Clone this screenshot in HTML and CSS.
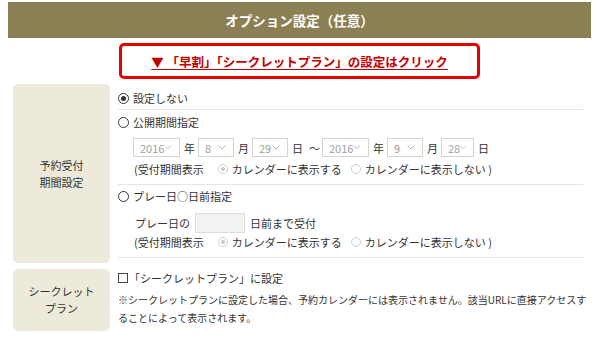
FILE: index.html
```html
<!DOCTYPE html>
<html lang="ja">
<head>
<meta charset="utf-8">
<title>オプション設定</title>
<link rel="stylesheet" href="styles.css">
</head>
<body>
<div class="page">
  <div class="head">オプション設定（任意）</div>
  <div class="toggle-wrap">
    <a class="toggle">▼ 「早割」「シークレットプラン」の設定はクリック</a>
  </div>
  <div class="table">
    <div class="row row-period">
      <div class="label">予約受付<br>期間設定</div>
      <div class="cell">
        <div class="opt opt1">
          <div class="title"><span class="radio on"></span>設定しない</div>
        </div>
        <div class="opt opt2">
          <div class="title"><span class="radio"></span>公開期間指定</div>
          <div class="dates">
            <span class="sel w-y">2016<svg class="chev" viewBox="0 0 8 5" width="8" height="5"><path d="M0.5 0.5 L4 4 L7.5 0.5"/></svg></span>
            <span class="unit">年</span>
            <span class="sel w-m">8<svg class="chev" viewBox="0 0 8 5" width="8" height="5"><path d="M0.5 0.5 L4 4 L7.5 0.5"/></svg></span>
            <span class="unit">月</span>
            <span class="sel w-m">29<svg class="chev" viewBox="0 0 8 5" width="8" height="5"><path d="M0.5 0.5 L4 4 L7.5 0.5"/></svg></span>
            <span class="unit">日</span>
            <span class="tilde">～</span>
            <span class="sel w-y">2016<svg class="chev" viewBox="0 0 8 5" width="8" height="5"><path d="M0.5 0.5 L4 4 L7.5 0.5"/></svg></span>
            <span class="unit">年</span>
            <span class="sel w-m">9<svg class="chev" viewBox="0 0 8 5" width="8" height="5"><path d="M0.5 0.5 L4 4 L7.5 0.5"/></svg></span>
            <span class="unit">月</span>
            <span class="sel w-d">28<svg class="chev" viewBox="0 0 8 5" width="8" height="5"><path d="M0.5 0.5 L4 4 L7.5 0.5"/></svg></span>
            <span class="unit">日</span>
          </div>
          <div class="sub">
            <span class="sub-lead">(受付期間表示</span>
            <span class="dradio on"></span><span>カレンダーに表示する</span>
            <span class="dradio second"></span><span>カレンダーに表示しない )</span>
          </div>
        </div>
        <div class="opt opt3">
          <div class="title"><span class="radio"></span>プレー日○日前指定</div>
          <div class="days">
            <span>プレー日の</span>
            <span class="num"></span>
            <span>日前まで受付</span>
          </div>
          <div class="sub">
            <span class="sub-lead">(受付期間表示</span>
            <span class="dradio on"></span><span>カレンダーに表示する</span>
            <span class="dradio second"></span><span>カレンダーに表示しない )</span>
          </div>
        </div>
      </div>
    </div>
    <div class="row row-secret">
      <div class="label">シークレット<br>プラン</div>
      <div class="cell">
        <div class="check-line"><span class="check"></span>「シークレットプラン」に設定</div>
        <div class="note">※シークレットプランに設定した場合、予約カレンダーには表示されません。該当URLに直接アクセスす<br>ることによって表示されます。</div>
      </div>
    </div>
  </div>
</div>
</body>
</html>
```

FILE: styles.css
```css
html, body {
  margin: 0;
  padding: 0;
  background: #ffffff;
}

body {
  font-family: "Noto Sans CJK JP", "Noto Sans", sans-serif;
  color: #333333;
  font-size: 11px;
}

.page {
  padding: 2px 9px 0 8px;
}

.head {
  height: 36px;
  background: #8b7f54;
  color: #ffffff;
  font-weight: bold;
  font-size: 13.5px;
  display: flex;
  align-items: center;
  justify-content: center;
}

.toggle-wrap {
  display: flex;
  justify-content: center;
  margin-top: 5px;
}

.toggle {
  box-sizing: border-box;
  width: 361px;
  height: 36px;
  border: 3px solid #e60000;
  border-radius: 5px;
  display: flex;
  align-items: center;
  justify-content: center;
  color: #c40000;
  font-weight: bold;
  font-size: 12.5px;
  text-decoration: underline;
  text-underline-offset: 2px;
}

.table {
  margin-top: 5px;
  padding: 0 8px 0 5px;
  display: flex;
  flex-direction: column;
  gap: 6px;
}

.row {
  display: flex;
  gap: 8px;
}

.label {
  width: 97px;
  flex: none;
  background: #edeadb;
  border-radius: 5px;
  display: flex;
  align-items: center;
  justify-content: center;
  text-align: center;
  line-height: 17px;
  font-size: 11px;
}

.row-period .label {
  height: 179px;
}

.row-secret .label {
  height: 62px;
}

.cell {
  flex: 1;
}

.opt {
  border-bottom: 1px solid #e6e6e6;
}

.opt1 {
  padding: 4px 0 1px;
}

.opt2 {
  padding: 2px 0 5px;
}

.opt3 {
  padding: 1px 0 6px;
}

.title {
  display: flex;
  align-items: center;
  line-height: 20px;
}

.radio {
  box-sizing: border-box;
  width: 11px;
  height: 11px;
  border: 1px solid #333333;
  border-radius: 50%;
  margin-right: 4px;
  display: inline-flex;
  align-items: center;
  justify-content: center;
  flex: none;
}

.radio.on::after {
  content: "";
  width: 5px;
  height: 5px;
  border-radius: 50%;
  background: #333333;
}

.dates {
  display: flex;
  align-items: center;
  margin: 6px 0 0 15px;
  height: 19px;
}

.sel {
  box-sizing: border-box;
  height: 19px;
  border: 1px solid #d4d4d4;
  background: #ffffff;
  color: #a0a0a0;
  display: inline-flex;
  align-items: center;
  justify-content: space-between;
  padding: 0 7px 0 6px;
  font-size: 11px;
}

.w-y { width: 47px; }
.w-m { width: 36px; }
.w-d { width: 33px; }

.chev {
  fill: none;
  stroke: #b4b4b4;
  stroke-width: 1;
}

.unit {
  margin: 0 3px 0 4px;
}

.tilde {
  margin: 0 2px 0 3px;
}

.sub {
  display: flex;
  align-items: center;
  margin: 2px 0 0 16px;
  line-height: 20px;
}

.opt3 .sub {
  margin-top: 0;
  line-height: 18px;
}

.dradio {
  box-sizing: border-box;
  width: 10px;
  height: 10px;
  border: 1px solid #cfcfcf;
  border-radius: 50%;
  margin: 0 4px 0 14px;
  display: inline-flex;
  align-items: center;
  justify-content: center;
  flex: none;
}

.dradio.second {
  margin-left: 9px;
}

.dradio.on::after {
  content: "";
  width: 4px;
  height: 4px;
  border-radius: 50%;
  background: #c8c8c8;
}

.days {
  display: flex;
  align-items: center;
  margin: 7px 0 0 17px;
  height: 20px;
}

.num {
  box-sizing: border-box;
  width: 50px;
  height: 20px;
  border: 1px solid #dcdcdc;
  background: #f2f2f2;
  margin: 0 5px;
}

.check-line {
  display: flex;
  align-items: center;
  line-height: 18px;
}

.check {
  box-sizing: border-box;
  width: 10px;
  height: 10px;
  border: 1px solid #444444;
  margin-right: 1px;
  flex: none;
}

.note {
  margin-top: 4px;
  font-size: 10px;
  line-height: 18px;
  white-space: nowrap;
}
```
